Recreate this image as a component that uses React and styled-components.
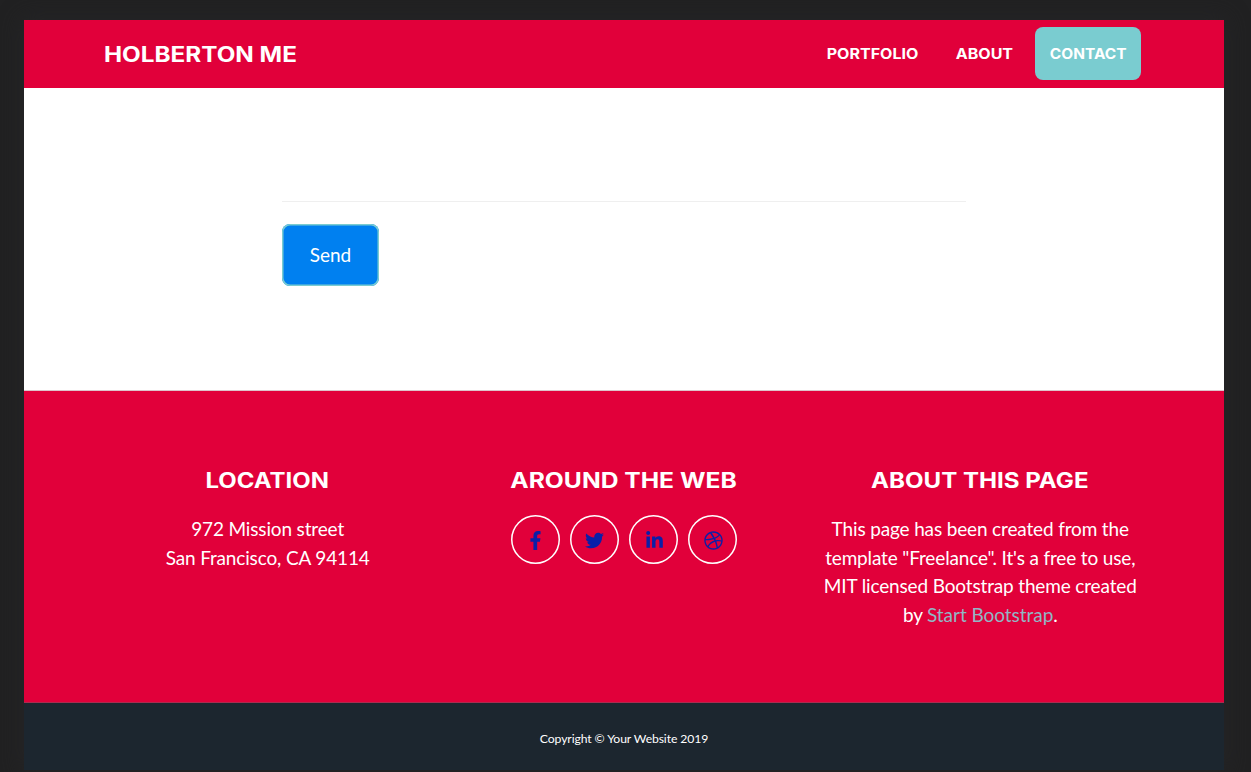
import React from 'react';
import styled, { createGlobalStyle } from 'styled-components';
import { FaFacebookF, FaTwitter, FaLinkedinIn, FaDribbble } from 'react-icons/fa';

const GlobalStyle = createGlobalStyle`
  * { box-sizing: border-box; }
  body { margin: 0; background: #212122; font-family: Lato, sans-serif; }
`;

const Backdrop = styled.div`
  height: 772px;
  padding: 20px 27px 0 24px;
  overflow: hidden;
  background: #212122;
`;

const Page = styled.div`
  width: 1200px;
  height: 750px;
  display: flex;
  flex-direction: column;
  background: #fff;
  box-shadow: 0 0 20px 2px #252527;
`;

const Navbar = styled.header`
  height: 68px;
  flex: none;
  display: flex;
  align-items: center;
  justify-content: space-between;
  padding: 0 83px 0 80px;
  background: #e1003a;
`;

const Display = styled.span`
  display: inline-block;
  white-space: nowrap;
  font-family: Inter, sans-serif;
  font-weight: 700;
  font-size: ${(p) => p.$size}px;
  line-height: 28px;
  color: #fff;
  transform: scaleX(${(p) => p.$stretch});
  transform-origin: ${(p) => p.$origin || 'center'};
`;

const Brand = styled.a`
  padding-top: 2px;
`;

const Nav = styled.nav`
  display: flex;
  gap: 8px;
  margin-bottom: 1px;
`;

const NavLink = styled.a`
  width: ${(p) => p.$width}px;
  height: 53px;
  padding-top: 1px;
  display: flex;
  align-items: center;
  justify-content: center;
  border-radius: 8px;
  background: ${(p) => (p.$active ? '#7accd0' : 'transparent')};
`;

const ContactSection = styled.main`
  height: 303px;
  flex: none;
  padding: 113px 258px 0;
  border-bottom: 1px solid #ddc4cb;
`;

const Divider = styled.div`
  height: 1px;
  margin-bottom: 22px;
  background: #efefef;
`;

const SendButton = styled.button`
  display: block;
  width: 97px;
  height: 62px;
  padding: 0;
  border: 0;
  border-radius: 8px;
  background: #0080f0;
  box-shadow: inset 0 0 0 1.5px #7accd0;
  color: #fff;
  font: 400 19px/28px Lato, sans-serif;
`;

const Footer = styled.footer`
  height: 312px;
  flex: none;
  display: grid;
  grid-template-columns: repeat(3, 356.3px);
  padding: 76px 66px 0 65.5px;
  border-bottom: 1px solid #a82d50;
  background: #e1003a;
  text-align: center;
  color: #fff;
`;

const Column = styled.section`
  display: flex;
  flex-direction: column;
  align-items: center;
`;

const Copy = styled.p`
  margin: 20.3px 0 0;
  font-size: 19px;
  line-height: 28.4px;
  letter-spacing: -0.15px;
  white-space: nowrap;
`;

const Link = styled.a`
  color: #92b6c4;
  letter-spacing: -0.05px;
`;

const Socials = styled.div`
  display: flex;
  gap: 10.3px;
  margin-top: 20px;
`;

const SocialLink = styled.a`
  width: 49px;
  height: 49px;
  padding: 1px 0 0 1px;
  display: flex;
  align-items: center;
  justify-content: center;
  box-shadow: inset 0 0 0 1.5px #fff;
  border-radius: 50%;
  color: #0a1fa8;
  font-size: 19px;
`;

const Copyright = styled.div`
  flex: 1;
  display: flex;
  align-items: center;
  justify-content: center;
  padding-top: 4px;
  background: #1c262f;
  color: #fff;
  font-size: 12.2px;
  letter-spacing: -0.1px;
`;

const links = [
  { label: 'PORTFOLIO', width: 120, stretch: 1.13 },
  { label: 'ABOUT', width: 86, stretch: 1.13 },
  { label: 'CONTACT', width: 106, stretch: 1.09, active: true },
];

const icons = [FaFacebookF, FaTwitter, FaLinkedinIn, FaDribbble];

export default function App() {
  return (
    <Backdrop>
      <GlobalStyle />
      <Page>
        <Navbar>
          <Brand>
            <Display $size={21} $stretch={1.155} $origin="left">HOLBERTON ME</Display>
          </Brand>
          <Nav>
            {links.map((l) => (
              <NavLink key={l.label} $width={l.width} $active={l.active}>
                <Display $size={14.2} $stretch={l.stretch}>{l.label}</Display>
              </NavLink>
            ))}
          </Nav>
        </Navbar>
        <ContactSection>
          <Divider />
          <SendButton type="button">Send</SendButton>
        </ContactSection>
        <Footer>
          <Column>
            <Display $size={21} $stretch={1.14}>LOCATION</Display>
            <Copy>972 Mission street<br />San Francisco, CA 94114</Copy>
          </Column>
          <Column>
            <Display $size={21} $stretch={1.173}>AROUND THE WEB</Display>
            <Socials>
              {icons.map((Icon, i) => (
                <SocialLink key={i}><Icon /></SocialLink>
              ))}
            </Socials>
          </Column>
          <Column>
            <Display $size={21} $stretch={1.147}>ABOUT THIS PAGE</Display>
            <Copy>
              This page has been created from the<br />
              template "Freelance". It's a free to use,<br />
              MIT licensed Bootstrap theme created<br />
              by <Link>Start Bootstrap</Link>.
            </Copy>
          </Column>
        </Footer>
        <Copyright>Copyright © Your Website 2019</Copyright>
      </Page>
    </Backdrop>
  );
}
